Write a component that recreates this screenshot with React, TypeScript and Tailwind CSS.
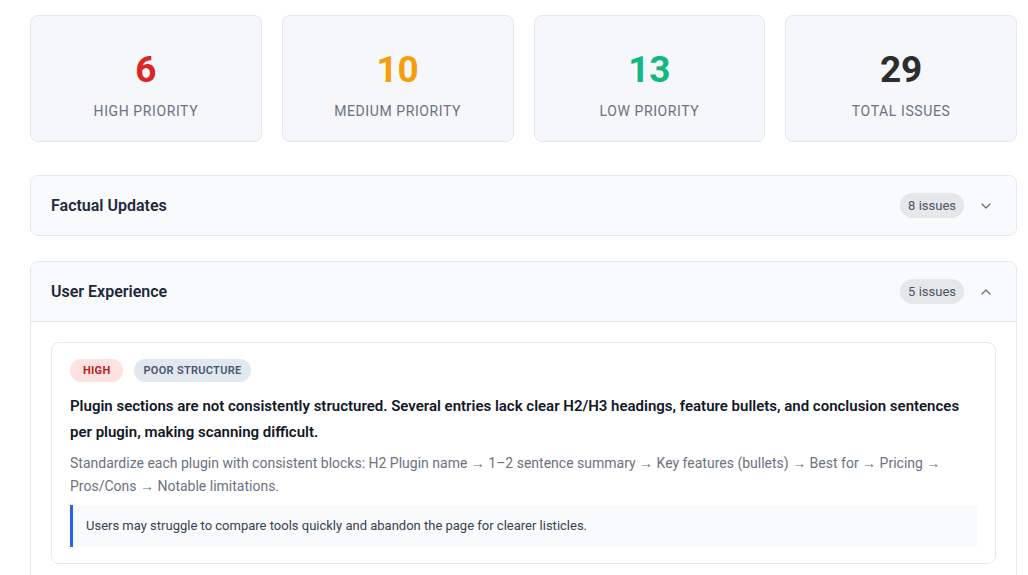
import React from 'react';
import { ChevronDown, ChevronUp } from 'lucide-react';

const stats = [
  { value: '6', label: 'High Priority', color: 'text-[#dc2626]' },
  { value: '10', label: 'Medium Priority', color: 'text-[#f59e0b]' },
  { value: '13', label: 'Low Priority', color: 'text-[#10b981]' },
  { value: '29', label: 'Total Issues', color: 'text-[#2d2d2d]' },
];

function StatCard({ value, label, color }: { value: string; label: string; color: string }) {
  return (
    <div className="flex h-[127px] flex-col items-center justify-center rounded-lg border border-[#e2e8f0] bg-[#f5f7fa] pt-[12px]">
      <div className={`text-[37px] font-bold leading-[44px] ${color}`}>{value}</div>
      <div className="mt-[9px] text-[14px] uppercase tracking-[0.6px] text-[#6b7280]">{label}</div>
    </div>
  );
}

function SectionHeader({ title, count, open }: { title: string; count: number; open: boolean }) {
  return (
    <div
      className={`flex items-center justify-between bg-[#f8fafc] pl-5 pr-[22px] ${
        open ? 'h-[60px] border-b border-[#e2e8f0]' : 'h-[59px]'
      }`}
    >
      <h3 className="text-[16px] font-semibold text-[#1e293b]">{title}</h3>
      <div className="flex items-center gap-[14px]">
        <span className="rounded-full bg-[#e5e7eb] px-[8px] py-[4px] text-[13px] leading-[17px] text-[#4b5563]">
          {count} issues
        </span>
        {open ? (
          <ChevronUp size={16} className="text-[#6b7280]" strokeWidth={2} />
        ) : (
          <ChevronDown size={16} className="text-[#6b7280]" strokeWidth={2} />
        )}
      </div>
    </div>
  );
}

export default function App() {
  return (
    <div
      className="min-h-screen bg-white pl-[30px] pr-[11px] pt-[15px]"
      style={{ fontFamily: 'Roboto, "Noto Sans", sans-serif' }}
    >
      <div className="grid grid-cols-4 gap-5">
        {stats.map((s) => (
          <StatCard key={s.label} {...s} />
        ))}
      </div>

      <div className="mt-[33px] overflow-hidden rounded-lg border border-[#e2e8f0]">
        <SectionHeader title="Factual Updates" count={8} open={false} />
      </div>

      <div className="mt-[25px] overflow-hidden rounded-lg border border-[#e2e8f0]">
        <SectionHeader title="User Experience" count={5} open />
        <div className="bg-white p-5">
          <div className="rounded-lg border border-[#e2e8f0] bg-white px-[18px] pb-4 pt-4">
            <div className="flex items-center gap-[11px]">
              <span className="rounded-full bg-[#fee2e2] px-[13px] py-[3px] text-[11px] font-bold leading-[17px] tracking-[0.3px] text-[#b91c1c]">
                HIGH
              </span>
              <span className="rounded-full bg-[#e2e8f0] px-[9px] py-[3px] text-[11px] font-semibold leading-[17px] tracking-[0.3px] text-[#475569]">
                POOR STRUCTURE
              </span>
            </div>
            <p className="mt-[11px] text-[15px] font-semibold leading-[26px] text-[#111827]">
              Plugin sections are not consistently structured. Several entries lack clear H2/H3 headings, feature bullets, and conclusion sentences per plugin, making scanning difficult.
            </p>
            <p className="mt-[7px] text-[14px] leading-[23px] text-[#6b7280]">
              Standardize each plugin with consistent blocks: H2 Plugin name → 1–2 sentence summary → Key features (bullets) → Best for → Pricing → Pros/Cons → Notable limitations.
            </p>
            <div className="mt-[7px] border-l-[3px] border-[#2563eb] bg-[#f8fafc] px-[13px] py-[12px] text-[13px] leading-[18px] text-[#374151]">
              Users may struggle to compare tools quickly and abandon the page for clearer listicles.
            </div>
          </div>
        </div>
      </div>
    </div>
  );
}
